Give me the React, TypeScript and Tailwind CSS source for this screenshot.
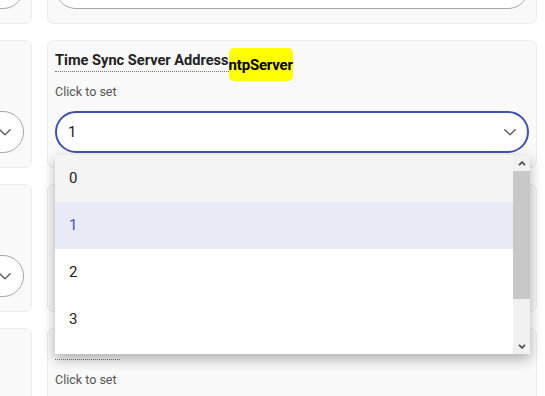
import React from 'react';

type Field = { title: string; keyName?: string; value?: string; open?: boolean };

const left: Field[] = [
  { title: 'Log Level' },
  { title: 'Time Zone' },
  { title: 'Date Format' },
  { title: 'Language' },
];

const right: Field[] = [
  { title: 'Time Sync Mode' },
  { title: 'Time Sync Server Address', keyName: 'ntpServer', value: '1', open: true },
  { title: 'Sync Interval' },
  { title: 'Timezone' },
];

const options = ['0', '1', '2', '3', '4', '5'];

function Chevron({ className }: { className?: string }) {
  return (
    <svg viewBox="0 0 12 7" className={className} fill="none">
      <path d="M0.8 0.8 L6 5.8 L11.2 0.8" stroke="#5f5f5f" strokeWidth="1.4" strokeLinecap="round" strokeLinejoin="round" />
    </svg>
  );
}

function ScrollArrow({ up }: { up?: boolean }) {
  return (
    <div className="h-[16px] flex items-center justify-center">
      <svg viewBox="0 0 8 5" className="w-[8px] h-[5px]" fill="none">
        <path d={up ? 'M1 4.2 L4 1.2 L7 4.2' : 'M1 0.8 L4 3.8 L7 0.8'} stroke="#505050" strokeWidth="1.8" />
      </svg>
    </div>
  );
}

function Dropdown({ value }: { value: string }) {
  return (
    <div className="absolute z-10 left-0 top-[calc(100%+2px)] w-[475px] h-[199px] flex bg-white shadow-[0_5px_12px_rgba(0,0,0,0.3)] overflow-hidden">
      <div className="flex-1 flex flex-col">
        {options.map((o, i) => (
          <div
            key={o}
            className={
              'h-[47px] shrink-0 flex items-center pl-[14px] text-[15px] ' +
              (o === value ? 'bg-[#e8eaf6] text-[#3f51b5]' : i === 0 ? 'bg-[#f4f4f4] text-[#222]' : 'text-[#222]')
            }
          >
            {o}
          </div>
        ))}
      </div>
      <div className="w-[17px] flex flex-col bg-[#f1f1f1]">
        <ScrollArrow up />
        <div className="h-[128px] bg-[#c8c8c8]" />
        <div className="flex-1" />
        <ScrollArrow />
      </div>
    </div>
  );
}

function Card({ f }: { f: Field }) {
  return (
    <div className="h-[128px] rounded-[7px] border border-[#ececec] bg-[#f9f9f9] px-[7px] pt-[7px]">
      <div className="h-[33px] flex items-start">
        <span className="mt-[2px] pb-[1px] leading-[20px] text-[14.6px] font-bold text-[#222] border-b border-dotted border-[#777]">
          {f.title}
        </span>
        {f.keyName && (
          <span className="h-[33px] pt-[7px] leading-[20px] text-[15px] font-bold text-black bg-[#ffff00] rounded-[5px] tracking-[-0.2px]">
            {f.keyName}
          </span>
        )}
      </div>
      <div className="mt-[1px] leading-[20px] text-[12.5px] text-[#555]">Click to set</div>
      <div className="relative mt-[9px]">
        <div
          className={
            'h-[42px] rounded-full bg-white flex items-center justify-between pl-[11px] pr-[11px] text-[15px] text-[#222] ' +
            (f.open ? 'border-2 border-[#3f51b5]' : 'border border-[#a8a8a8] pl-[12px] pr-[12px]')
          }
        >
          <span>{f.value ?? ''}</span>
          <Chevron className="w-[12px] h-[7px]" />
        </div>
        {f.open && <Dropdown value={f.value ?? ''} />}
      </div>
    </div>
  );
}

export default function App() {
  return (
    <div className="w-[545px] h-[396px] overflow-hidden bg-white" style={{ fontFamily: 'Roboto, "Liberation Sans", sans-serif' }}>
      <div className="grid grid-cols-[490px_490px] gap-x-[15px] gap-y-[16px] -ml-[458px] -mt-[104px]">
        {right.map((r, i) => (
          <React.Fragment key={i}>
            <Card f={left[i]} />
            <Card f={r} />
          </React.Fragment>
        ))}
      </div>
    </div>
  );
}
